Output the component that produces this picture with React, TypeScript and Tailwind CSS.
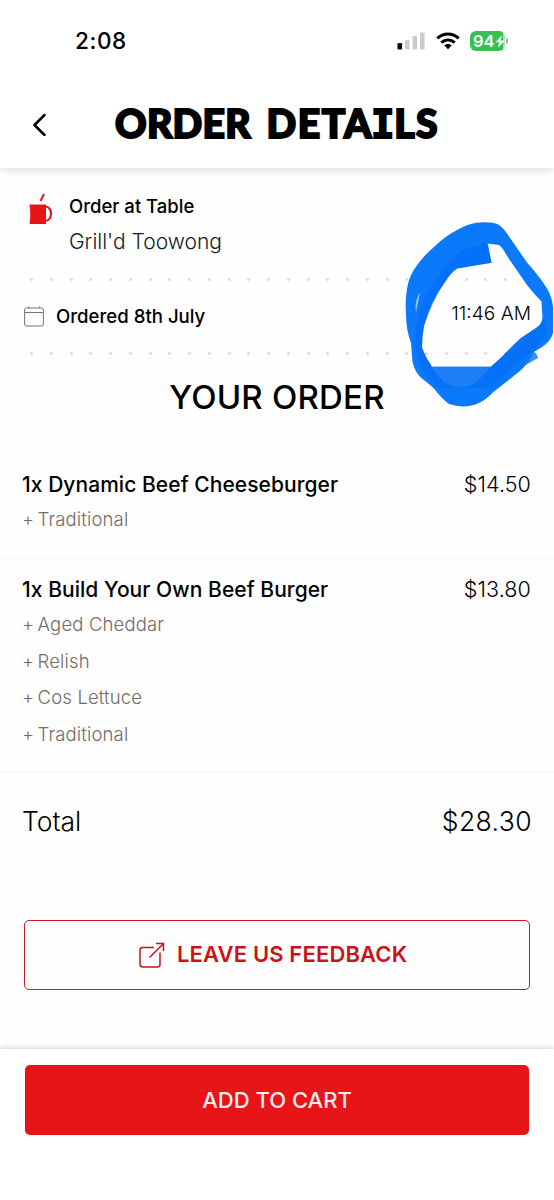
import React from 'react'

const items = [
    { name: '1x Dynamic Beef Cheeseburger', price: '$14.50', extras: ['Traditional'] },
    { name: '1x Build Your Own Beef Burger', price: '$13.80', extras: ['Aged Cheddar', 'Relish', 'Cos Lettuce', 'Traditional'] },
]

const StatusBar = () => {
    return (
        <div className='flex h-[82px] items-center pl-[75px] pr-[46px]'>
            <div className='flex-1 pt-px text-[22.500px] font-medium leading-none tracking-[0.6px]'>2:08</div>
            <svg width='28' height='18' viewBox='0 0 28 18' className='mr-[11px]'>
                <rect x='0.5' y='11' width='4.6' height='6.5' rx='1.2' fill='#000' />
                <rect x='8' y='8' width='4.6' height='9.5' rx='1.2' fill='#cbcbcb' />
                <rect x='15.500' y='4' width='4.6' height='13.500' rx='1.2' fill='#cbcbcb' />
                <rect x='23' y='0.500' width='4.6' height='17' rx='1.2' fill='#cbcbcb' />
            </svg>
            <svg width='24' height='18' viewBox='0 0 24 18' className='mr-[10px]' fill='none' stroke='#000' strokeWidth='3'>
                <path d='M1.300 6.300C7.500 .5 16.500 .5 22.700 6.300' />
                <path d='M5.300 10.600C9.300 7 14.700 7 18.700 10.600' />
                <path d='M8.300 13.500C10.500 11.600 13.500 11.600 15.700 13.500L12 17.300Z' fill='#000' stroke='none' />
            </svg>
            <div className='flex items-center'>
                <div className='flex h-[20px] w-[35px] items-center rounded-[6px] bg-[linear-gradient(90deg,#33c252_94%,#aedfb8_94%)] pl-[3px] text-white'>
                    <span className='text-[16.500px] font-semibold leading-none'>94</span>
                    <svg width='10' height='13' viewBox='0 0 10 13' fill='#fff'><path d='M7 0L0.500 7.300H4.300L2.800 13L9.500 5.400H5.500Z' /></svg>
                </div>
                <div className='ml-px h-[6px] w-[2px] rounded-r-full bg-[#aaa]'></div>
            </div>
        </div>
    )
}

const DottedLine = () => {
    return (
        <div className='flex justify-between pl-[30px] pr-[27px]'>
            {Array.from({ length: 26 }).map((_, i) => (
                <div key={i} className='h-[3px] w-[3px] rounded-full bg-[#dcdbd8]'></div>
            ))}
        </div>
    )
}

// marker ring drawn round the order time
const MarkerRing = () => {
    return (
        <svg className='pointer-events-none absolute left-[394px] top-[210px]' width='160' height='210' viewBox='394 210 160 210'>
            <path d='M519 347L536 353L538 358L515 371L500 380Z' fill='#3b91fb' />
            <path
                fillRule='evenodd'
                fill='#0a7afb'
                d='M476 222.700Q487 221.500 496 223.500Q502 226 507 233.500L527 262.500Q540 277 547.300 289Q552 297 553 307V333Q551 341 542 347L534 352Q528 364 520 371L494 391.500Q485 401 475.700 404.500Q462 408.500 449 404Q441 398 434 388.500Q428 383 420.700 377.500Q415 372 412.500 362L411 343Q406 330 406 314Q405 300 407 289Q408 280 414 269.500Q422 257 434 247Q445 236 458 229.500Q468 224 476 222.700ZM487.500 243.500L491.500 262.700L457 268.500Q450 273 445 282Q430 302 424 326Q422 336 422 348Q426 358 432 366.700H490.700L502 356.700Q511 347 521 338L536 328Q542 324 542.500 318L541.500 301.500Q533 293 527 285L507 256Q503 248 499 245Z'
            />
            <path d='M432 366.700H491L474 384Q458 391 447 386Q438 378 432 366.700Z' fill='#1f80f6' />
            <path d='M460 252Q473 245 488 243.500L491.500 262.700L457 268.500Q440 282 424 326Q422 336 422 348Q432 372 444 382Q459 390 475 384L491 367L502 356.700Q511 347 521 338L536 328Q542 324 542.500 318L548 331Q542 342 523 359L491 387Q468 389 440 388Q425 380 418 359Q412 339 419 315Q428 281 460 252Z' fill='#0067f6' fillOpacity='.5' />
            <path d='M420 292Q414 302 416 312Q418 304 420 292Z' fill='#8fc3ff' />
        </svg>
    )
}

const App = () => {
    return (
        <div className="relative flex h-[1200px] w-[554px] flex-col overflow-hidden bg-[#fefefe] font-['Inter','Liberation_Sans',sans-serif] text-black">
            <div className='relative h-[168px] bg-white shadow-[0_2px_8px_rgba(0,0,0,0.13)]'>
                <StatusBar />
                <div className='flex h-[84px] items-center pl-[32px]'>
                    <svg width='16' height='24' viewBox='0 0 16 24' fill='none' stroke='#000' strokeWidth='2.500' strokeLinecap='round' strokeLinejoin='round'>
                        <path d='M12.500 3L2.500 13L12.500 23' />
                    </svg>
                    <div className="ml-[67px] whitespace-nowrap font-['Lato'] text-[39px] font-black leading-none tracking-[0.300px] [word-spacing:6px] [-webkit-text-stroke:2px_black]">
                        ORDER <span className='tracking-[1.600px]'>DETA<span className="mx-[-2px] font-['DejaVu_Sans_Mono'] font-bold">I</span>LS</span>
                    </div>
                </div>
            </div>

            <div className='flex h-[110px] pl-[28px] pt-[24px]'>
                <svg width='26' height='34' viewBox='0 0 26 34' fill='#e81518'>
                    <path d='M1.500 12.500H18V32H1.500Q3 23 1.500 12.500Z' />
                    <path d='M17 14.500C25 14 25 29 17 29' fill='none' stroke='#e81518' strokeWidth='2.200' />
                    <path d='M12.500 9L16 2' stroke='#e81518' strokeWidth='2' />
                </svg>
                <div className='pl-[15px]'>
                    <div className='h-[28px] text-[18.500px] font-medium leading-[28px]'>Order at Table</div>
                    <div className='mt-[8px] h-[28px] text-[21px] font-[350] leading-[28px] text-[#161a22]'>Grill'd Toowong</div>
                </div>
            </div>
            <DottedLine />
            <div className='flex h-[71px] items-center pl-[24px] pr-[23px]'>
                <svg width='20' height='21' viewBox='0 0 20 21' fill='none' stroke='#77706c'>
                    <rect x='0.600' y='2' width='18.800' height='18' rx='2' />
                    <path d='M1 6.500H19M4.500 0.500V2M15.500 0.500V2' />
                </svg>
                <div className='flex-1 pl-[12px] text-[18.600px] font-medium leading-none'>Ordered 8th July</div>
                <div className='pb-[5px] text-[19.200px] font-[350] leading-none'>11:46 AM</div>
            </div>
            <DottedLine />

            <div className='flex h-[83px] items-center justify-center pt-px text-[33px] font-medium leading-none tracking-[0.200px]'>YOUR ORDER</div>

            {items.map((item, i) => (
                <div key={i} className={`border-b border-[#f5f5f5] px-[22px] ${i === 0 ? 'h-[121px] pt-[31px]' : 'h-[214px] pt-[15px]'}`}>
                    <div className='flex h-[30px] items-center justify-between'>
                        <div className='text-[21px] font-medium leading-none tracking-[0.050px]'>{item.name}</div>
                        <div className='pr-px pt-[2px] text-[21.500px] font-[350] leading-none tracking-[0.100px]'>{item.price}</div>
                    </div>
                    <div className='pt-[3px] text-[18.500px] font-[350] tracking-[0.150px] text-[#756b67]'>
                        {item.extras.map((extra) => (
                            <div key={extra} className='h-[36.700px] leading-[34px]'>
                                <span className='mr-[-2px]'>+ </span>{extra}
                            </div>
                        ))}
                    </div>
                </div>
            ))}

            <div className='flex h-[98px] items-center justify-between px-[22px] pb-px text-[26.500px] font-[350] leading-none'>
                <div>Total</div>
                <div className='tracking-[0.400px]'>$28.30</div>
            </div>

            <div className='mx-[24px] mt-[49px] flex h-[70px] items-center rounded-[5px] border border-[#c81a20] pl-[114px] text-[#cb1218]'>
                <svg width='26' height='26' viewBox='0 0 26 26' fill='none' stroke='#cb1218' strokeWidth='1.500'>
                    <path d='M15 5.500H3.500Q1 5.500 1 8V22.500Q1 25 3.500 25H18.500Q21 25 21 22.500V10.500' />
                    <path d='M10.500 15.500L24.500 1.500M17 1.500H24.500V9' />
                </svg>
                <div className='pb-[2px] pl-[12px] text-[22px] font-semibold leading-none tracking-[0.150px]'>LEAVE US FEEDBACK</div>
            </div>

            <div className='mt-auto h-[151px] bg-white px-[25px] pt-[16px] shadow-[0_-1px_5px_rgba(0,0,0,0.2)]'>
                <div className='flex h-[70px] items-center justify-center rounded-[5px] bg-[#e81518] text-[22px] font-medium leading-none text-[#ffecec]'>ADD TO CART</div>
            </div>

            <MarkerRing />
        </div>
    )
}

export default App
